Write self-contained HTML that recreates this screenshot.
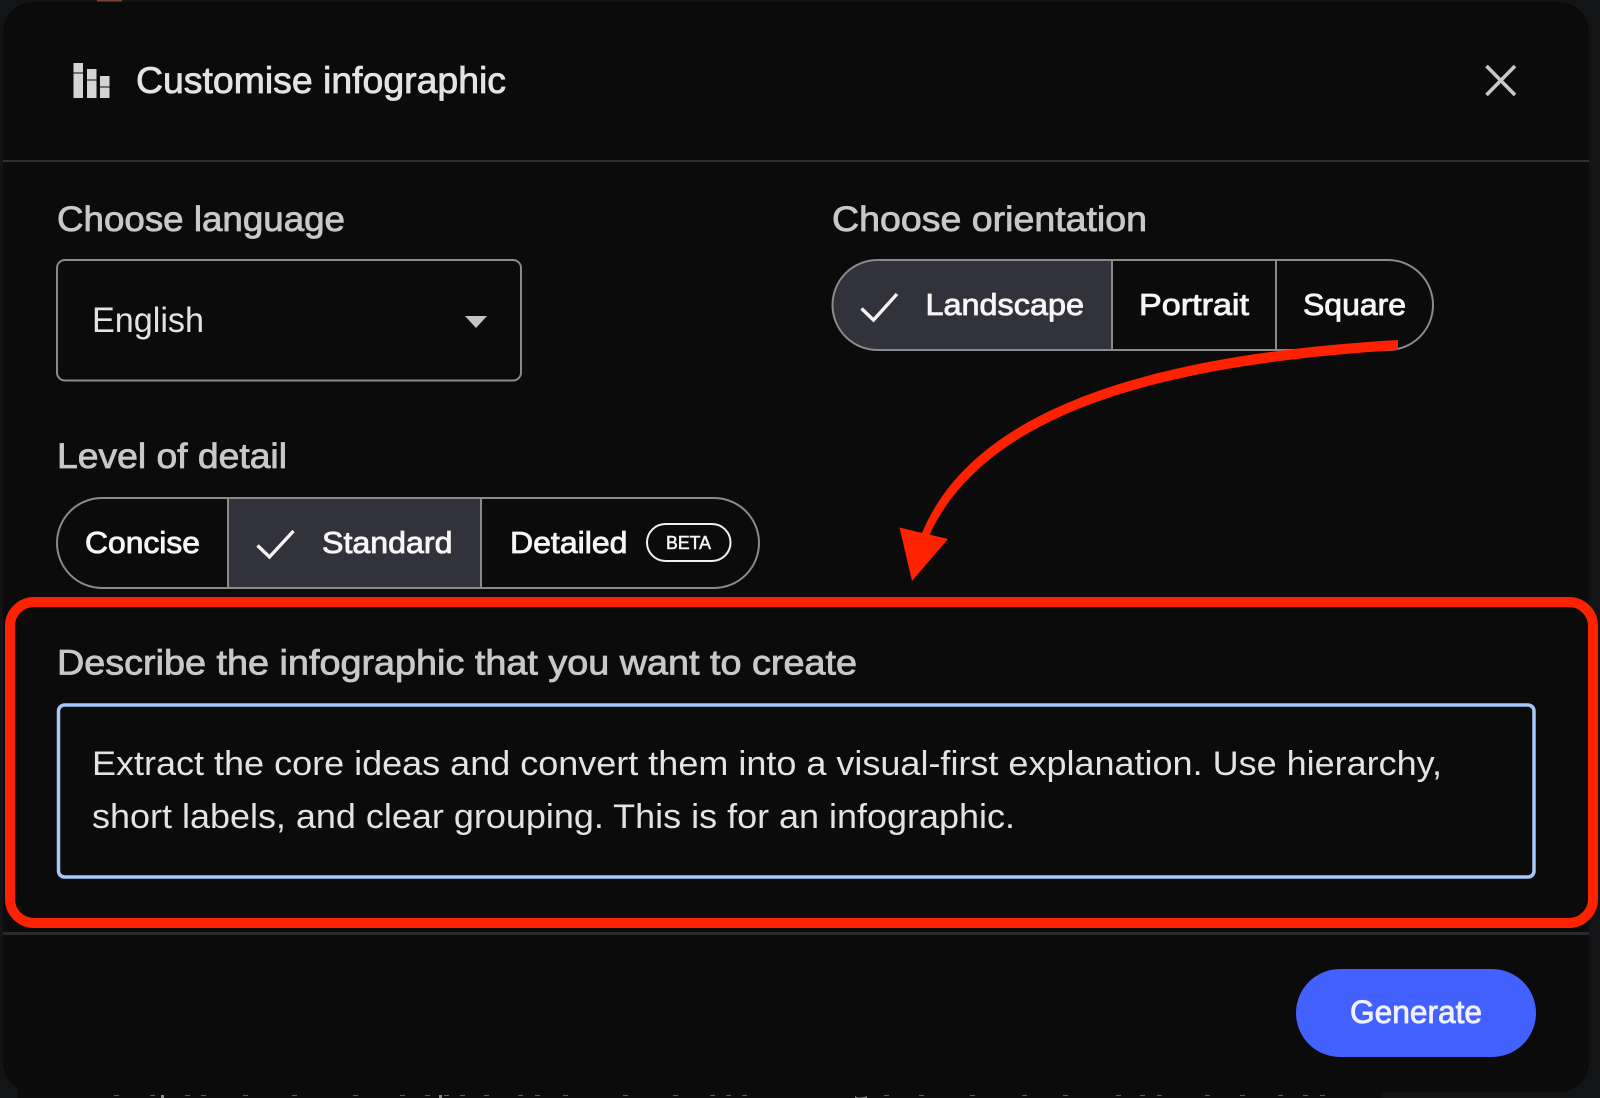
<!DOCTYPE html>
<html lang="en">
<head>
<meta charset="utf-8">
<title>Customise infographic</title>
<style>
html,body{margin:0;padding:0;width:1600px;height:1098px;overflow:hidden;background:#131416}
svg{display:block}
text{font-family:"Liberation Sans",sans-serif}
.t{fill:#e3e3e3}
.l{fill:#c8c8c8;stroke:#c8c8c8;stroke-width:.8}
.b{fill:#f6f6f6;stroke:#f6f6f6;stroke-width:.85}
</style>
</head>
<body>
<svg width="1600" height="1098" viewBox="0 0 1600 1098" xmlns="http://www.w3.org/2000/svg">
  <rect width="1600" height="1098" fill="#131416"/>
  <rect x="18" y="1080" width="1363" height="18" fill="#0c0c0d"/>
  <rect x="97" y="0" width="25" height="1.500" fill="#7a4038"/>
  <!-- peeking content under the dialog -->
  <g fill="#8a8a8a">
    <rect x="161" y="1095" width="3" height="3"/><rect x="439" y="1095" width="3" height="3"/>
    <path d="M855 1096q2 2 6 1.500t6-1.500v2h-12z"/>
  </g>
  <g fill="#5c5c5c">
    <rect x="114" y="1095" width="5" height="1"/><rect x="150" y="1095" width="5" height="1"/><rect x="185" y="1095" width="5" height="1"/><rect x="201" y="1095" width="5" height="1"/><rect x="243" y="1095" width="5" height="1"/><rect x="292" y="1095" width="5" height="1"/><rect x="353" y="1095" width="5" height="1"/><rect x="400" y="1095" width="5" height="1"/><rect x="425" y="1095" width="5" height="1"/><rect x="444" y="1095" width="5" height="1"/><rect x="460" y="1095" width="5" height="1"/><rect x="484" y="1095" width="5" height="1"/><rect x="518" y="1095" width="5" height="1"/><rect x="535" y="1095" width="5" height="1"/><rect x="563" y="1095" width="5" height="1"/><rect x="623" y="1095" width="5" height="1"/><rect x="673" y="1095" width="5" height="1"/><rect x="710" y="1095" width="5" height="1"/><rect x="726" y="1095" width="5" height="1"/><rect x="742" y="1095" width="5" height="1"/><rect x="884" y="1095" width="5" height="1"/><rect x="919" y="1095" width="5" height="1"/><rect x="970" y="1095" width="5" height="1"/><rect x="1022" y="1095" width="5" height="1"/><rect x="1063" y="1095" width="5" height="1"/><rect x="1116" y="1095" width="5" height="1"/><rect x="1140" y="1095" width="5" height="1"/><rect x="1157" y="1095" width="5" height="1"/><rect x="1205" y="1095" width="5" height="1"/><rect x="1240" y="1095" width="5" height="1"/><rect x="1278" y="1095" width="5" height="1"/><rect x="1303" y="1095" width="5" height="1"/><rect x="1320" y="1095" width="5" height="1"/>
  </g>

  <!-- dialog -->
  <rect x="3" y="2" width="1586" height="1090" rx="30" fill="#0b0b0c"/>

  <!-- header -->
  <g fill="#d4d4d4">
    <rect x="73.500" y="63" width="9.500" height="9.500"/><rect x="73.500" y="73.500" width="9.500" height="24.500"/>
    <rect x="87" y="69" width="9.500" height="10.500"/><rect x="87" y="80.500" width="9.500" height="17.500"/>
    <rect x="100" y="76" width="9.500" height="10.500"/><rect x="100" y="87.500" width="9.500" height="10.500"/>
  </g>
  <text class="t" x="136" y="93" font-size="37" textLength="370" lengthAdjust="spacingAndGlyphs" stroke="#e3e3e3" stroke-width=".8">Customise infographic</text>
  <path d="M1486.500 66L1515 95M1515 66L1486.500 95" stroke="#c8c8c8" stroke-width="3.600" fill="none"/>
  <rect x="3" y="160" width="1586" height="2" fill="#2e2e36"/>

  <!-- language -->
  <text class="l" x="57" y="231" font-size="35" textLength="288" lengthAdjust="spacingAndGlyphs">Choose language</text>
  <rect x="57" y="260" width="464" height="120.500" rx="8" fill="none" stroke="#8a8a8a" stroke-width="2"/>
  <text class="t" x="92" y="332" font-size="35" textLength="112" lengthAdjust="spacingAndGlyphs">English</text>
  <path d="M465 316h22l-11 12z" fill="#c4c4c4"/>

  <!-- orientation -->
  <text class="l" x="832" y="231" font-size="35" textLength="315" lengthAdjust="spacingAndGlyphs">Choose orientation</text>
  <path d="M1112 260H877.500a45 45 0 0 0 0 90H1112z" fill="#32323c"/>
  <rect x="832.500" y="260" width="600.500" height="90" rx="45" fill="none" stroke="#8a8a8a" stroke-width="2"/>
  <path d="M1112 260V350M1276 260V350" stroke="#8a8a8a" stroke-width="2"/>
  <path d="M861.500 308.500L873.500 320L897 294" fill="none" stroke="#f4f4f4" stroke-width="3.400"/>
  <text class="b" x="925.500" y="315" font-size="31" textLength="158.500" lengthAdjust="spacingAndGlyphs">Landscape</text>
  <text class="b" x="1139" y="315" font-size="31" textLength="110" lengthAdjust="spacingAndGlyphs">Portrait</text>
  <text class="b" x="1303" y="315" font-size="31" textLength="103" lengthAdjust="spacingAndGlyphs">Square</text>

  <!-- detail -->
  <text class="l" x="57" y="468" font-size="35" textLength="230" lengthAdjust="spacingAndGlyphs">Level of detail</text>
  <rect x="228" y="498" width="253" height="90" fill="#32323c"/>
  <rect x="57" y="498" width="702" height="90" rx="45" fill="none" stroke="#8a8a8a" stroke-width="2"/>
  <path d="M228 498V588M481 498V588" stroke="#8a8a8a" stroke-width="2"/>
  <path d="M257.500 545.500L269.500 557L293.500 531" fill="none" stroke="#f4f4f4" stroke-width="3.400"/>
  <text class="b" x="85" y="553" font-size="31" textLength="115" lengthAdjust="spacingAndGlyphs">Concise</text>
  <text class="b" x="322" y="553" font-size="31" textLength="130.500" lengthAdjust="spacingAndGlyphs">Standard</text>
  <text class="b" x="510" y="553" font-size="31" textLength="117.500" lengthAdjust="spacingAndGlyphs">Detailed</text>
  <rect x="647" y="524" width="83.500" height="37" rx="18.500" fill="none" stroke="#f0f0f0" stroke-width="2"/>
  <text class="b" x="666" y="549" font-size="18" textLength="45" lengthAdjust="spacingAndGlyphs" style="stroke-width:.5">BETA</text>

  <!-- describe -->
  <text class="l" x="57" y="674.500" font-size="35" textLength="800" lengthAdjust="spacingAndGlyphs">Describe the infographic that you want to create</text>
  <rect x="58.500" y="705" width="1475.500" height="172" rx="6" fill="none" stroke="#a8c7fa" stroke-width="3.500"/>
  <text class="t" x="92" y="775" font-size="34.500" textLength="1350" lengthAdjust="spacingAndGlyphs">Extract the core ideas and convert them into a visual-first explanation. Use hierarchy,</text>
  <text class="t" x="92" y="828" font-size="34.500" textLength="923" lengthAdjust="spacingAndGlyphs">short labels, and clear grouping. This is for an infographic.</text>

  <!-- footer -->
  <rect x="3" y="932" width="1586" height="3" fill="#2a2a30"/>
  <rect x="1296" y="969" width="240" height="88" rx="44" fill="#4361ff"/>
  <text x="1350" y="1023" font-size="32" textLength="132" lengthAdjust="spacingAndGlyphs" fill="#f0f3ff" stroke="#f0f3ff" stroke-width=".85">Generate</text>

  <!-- annotations -->
  <rect x="10" y="602" width="1583" height="321" rx="24" fill="none" stroke="#ff2200" stroke-width="10"/>
  <path d="M1398 340C1160 354 975 405 922 533L929 536C985 413 1160 365 1398 350Z" fill="#ff2200"/>
  <path d="M899.500 527.500L948 539L912 581Z" fill="#ff2200"/>
</svg>
</body>
</html>
